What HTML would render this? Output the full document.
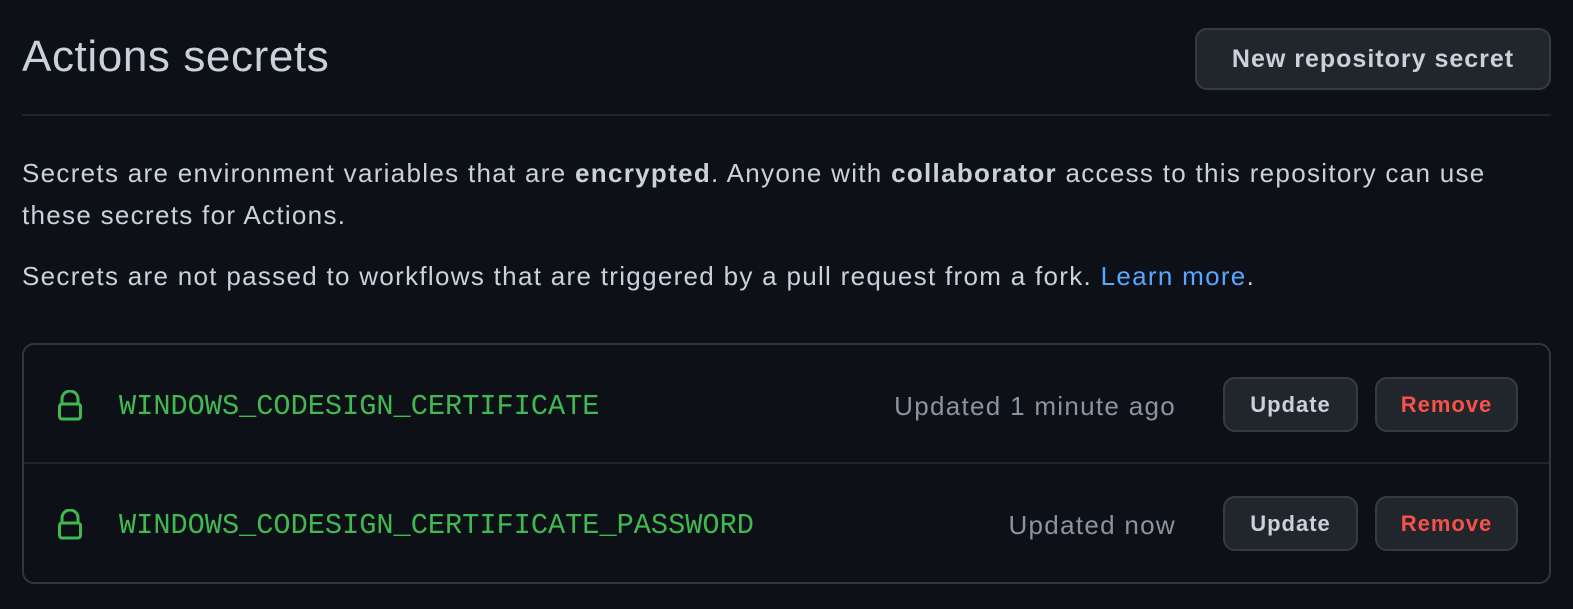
<!DOCTYPE html>
<html><head><style>
body{margin:0;background:#0d1117;width:1573px;height:609px;overflow:hidden;font-family:"Liberation Sans",sans-serif;color:#c9d1d9;position:relative}
.a{position:absolute}
h1{position:absolute;left:22px;top:29px;margin:0;font-weight:400;font-size:44px;letter-spacing:0.6px;line-height:56px;color:#c9d1d9}
.btn{position:absolute;background:#21262d;border:2px solid #363b42;border-radius:12px;box-sizing:border-box;color:#c9d1d9;font-weight:bold;display:flex;align-items:center;justify-content:center}
p{position:absolute;left:22px;margin:0;font-size:26px;letter-spacing:1.3px;line-height:42px;width:1490px}
.box{left:22px;top:343px;width:1529px;height:241px;border:2px solid #30363d;border-radius:12px;box-sizing:border-box}
.name{font-family:"Liberation Mono",monospace;font-size:28.6px;color:#3fb950;left:119px}
.upd{font-size:26px;letter-spacing:1.3px;color:#8b949e;right:397px;text-align:right}
.sm{font-size:22px;letter-spacing:1px}
</style></head><body>
<h1>Actions secrets</h1>
<div class="btn" style="left:1195px;top:28px;width:356px;height:62px;font-size:25px;letter-spacing:1px">New repository secret</div>
<div class="a" style="left:22px;top:114px;width:1529px;height:2px;background:#21262d"></div>
<p style="top:152px">Secrets are environment variables that are <b>encrypted</b>. Anyone with <b>collaborator</b> access to this repository can use these secrets for Actions.</p>
<p style="top:255px">Secrets are not passed to workflows that are triggered by a pull request from a fork. <span style="color:#58a6ff">Learn more</span>.</p>
<div class="a box"></div>
<div class="a" style="left:24px;top:462px;width:1525px;height:2px;background:#21262d"></div>
<svg class="a" style="left:56px;top:390px" width="28" height="32" viewBox="0 0 28 32"><path d="M6 14V9a8 8 0 0 1 16 0v5" fill="none" stroke="#3fb950" stroke-width="3"/><rect x="3.5" y="14" width="21" height="15" rx="2.5" fill="none" stroke="#3fb950" stroke-width="3"/></svg>
<svg class="a" style="left:56px;top:509px" width="28" height="32" viewBox="0 0 28 32"><path d="M6 14V9a8 8 0 0 1 16 0v5" fill="none" stroke="#3fb950" stroke-width="3"/><rect x="3.5" y="14" width="21" height="15" rx="2.5" fill="none" stroke="#3fb950" stroke-width="3"/></svg>
<div class="a name" style="top:390px">WINDOWS_CODESIGN_CERTIFICATE</div>
<div class="a name" style="top:509px">WINDOWS_CODESIGN_CERTIFICATE_PASSWORD</div>
<div class="a upd" style="top:391px">Updated 1 minute ago</div>
<div class="a upd" style="top:510px">Updated now</div>
<div class="btn sm" style="left:1223px;top:377px;width:135px;height:55px">Update</div>
<div class="btn sm" style="left:1375px;top:377px;width:143px;height:55px;color:#f85149">Remove</div>
<div class="btn sm" style="left:1223px;top:496px;width:135px;height:55px">Update</div>
<div class="btn sm" style="left:1375px;top:496px;width:143px;height:55px;color:#f85149">Remove</div>
</body></html>
